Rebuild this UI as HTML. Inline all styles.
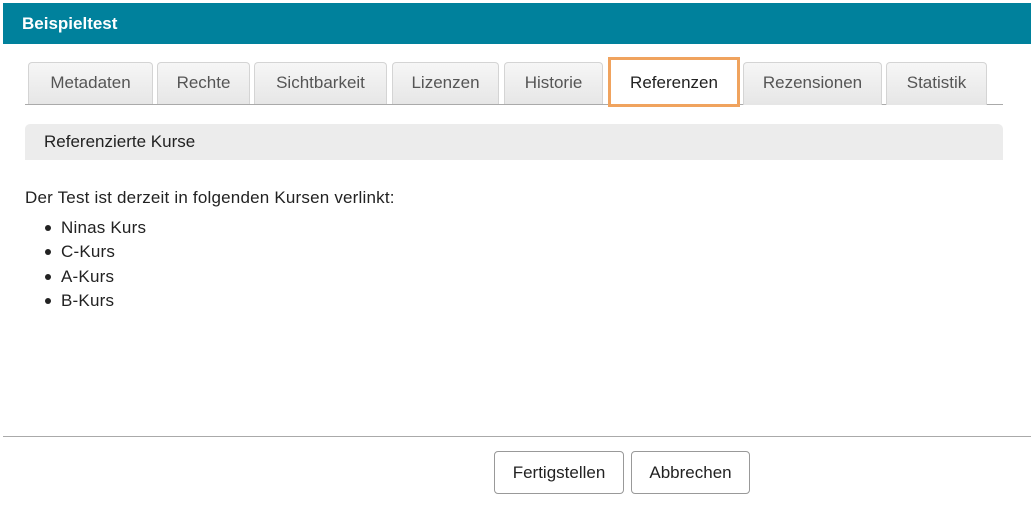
<!DOCTYPE html>
<html><head><meta charset="utf-8"><style>
*{margin:0;padding:0;box-sizing:border-box}
body{width:1031px;height:508px;background:#fff;font-family:"Liberation Sans",sans-serif;color:#222;position:relative;overflow:hidden}
.hdr{position:absolute;left:3px;top:3px;width:1028px;height:41px;background:#00819c;color:#fff;font-weight:bold;font-size:17px;line-height:41px;padding-left:19px}
.tab{position:absolute;top:62px;height:43px;border:1px solid #d4d4d4;border-bottom:none;border-radius:4px 4px 0 0;background:linear-gradient(#f6f6f6,#e6e6e6);color:#555;font-size:17px;text-align:center;line-height:40px}
.tab.act{top:57px;height:50px;background:#fff;border:3px solid #f0a35e;border-radius:0;color:#222;line-height:46px}
.line{position:absolute;left:25px;top:104px;width:978px;height:1px;background:#aaa}
.sec{position:absolute;left:25px;top:124px;width:978px;height:36px;background:#ececec;border-radius:5px 5px 0 0;font-size:17px;line-height:35px;padding-left:19px}
.txt{position:absolute;left:25px;font-size:17px;line-height:20px;letter-spacing:0.2px}
.li{position:absolute;left:61px;font-size:17px;letter-spacing:0.2px}
.li:before{content:"";position:absolute;left:-16px;top:7px;width:6px;height:6px;border-radius:50%;background:#222}
.sep{position:absolute;left:3px;top:436px;width:1028px;height:1px;background:#aaa}
.btn{position:absolute;top:451px;height:43px;border:1px solid #999;border-radius:4px;font-size:17px;text-align:center;line-height:41px;background:#fff}
</style></head><body>
<div class="hdr">Beispieltest</div>
<div class="tab" style="left:28px;width:125px">Metadaten</div>
<div class="tab" style="left:157px;width:93px">Rechte</div>
<div class="tab" style="left:254px;width:133px">Sichtbarkeit</div>
<div class="tab" style="left:392px;width:107px">Lizenzen</div>
<div class="tab" style="left:504px;width:99px">Historie</div>
<div class="line"></div>
<div class="tab act" style="left:608px;width:132px">Referenzen</div>
<div class="tab" style="left:743px;width:139px">Rezensionen</div>
<div class="tab" style="left:886px;width:101px">Statistik</div>
<div class="sec">Referenzierte Kurse</div>
<div class="txt" style="top:188px">Der Test ist derzeit in folgenden Kursen verlinkt:</div>
<div class="li" style="top:218px">Ninas Kurs</div>
<div class="li" style="top:242px">C-Kurs</div>
<div class="li" style="top:267px">A-Kurs</div>
<div class="li" style="top:291px">B-Kurs</div>
<div class="sep"></div>
<div class="btn" style="left:494px;width:130px">Fertigstellen</div>
<div class="btn" style="left:631px;width:119px">Abbrechen</div>
</body></html>
